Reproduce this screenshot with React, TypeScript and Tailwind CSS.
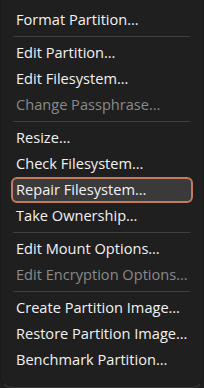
import React from 'react'

type Entry = { label: string; disabled?: boolean; active?: boolean } | 'sep'

const entries: Entry[] = [
  { label: 'Format Partition…' },
  'sep',
  { label: 'Edit Partition…' },
  { label: 'Edit Filesystem…' },
  { label: 'Change Passphrase…', disabled: true },
  'sep',
  { label: 'Resize…' },
  { label: 'Check Filesystem…' },
  { label: 'Repair Filesystem…', active: true },
  { label: 'Take Ownership…' },
  'sep',
  { label: 'Edit Mount Options…' },
  { label: 'Edit Encryption Options…', disabled: true },
  'sep',
  { label: 'Create Partition Image…' },
  { label: 'Restore Partition Image…' },
  { label: 'Benchmark Partition…' },
]

export default function App() {
  return (
    <div className="w-[204px] h-[388px] bg-[#1f1f1f] overflow-hidden">
      <div
        className="w-[204px] h-[388px] bg-[#1f1f1f] border-x border-b border-x-[#1a1a1a] border-b-[#3a3a3a] rounded-b-[12px] pt-[7px] px-[10px] text-[14.6px] text-[#f2f2f2]"
        style={{ fontFamily: '"Open Sans", "Noto Sans", sans-serif' }}
      >
        {entries.map((e, i) =>
          e === 'sep' ? (
            <div key={i} className="h-px my-[3px] ml-[2px] mr-[3px] bg-[#3f3f3f]" />
          ) : (
            <div
              key={i}
              className={`h-[26px] flex items-center rounded-[6px] whitespace-nowrap ${
                e.active
                  ? 'border-2 border-[#c47a5e] bg-[#3a3a3a] pl-[3px]'
                  : 'pl-[5px]'
              } ${e.disabled ? 'text-[#8a8a8a]' : ''}`}
            >
              {e.label}
            </div>
          )
        )}
      </div>
    </div>
  )
}
